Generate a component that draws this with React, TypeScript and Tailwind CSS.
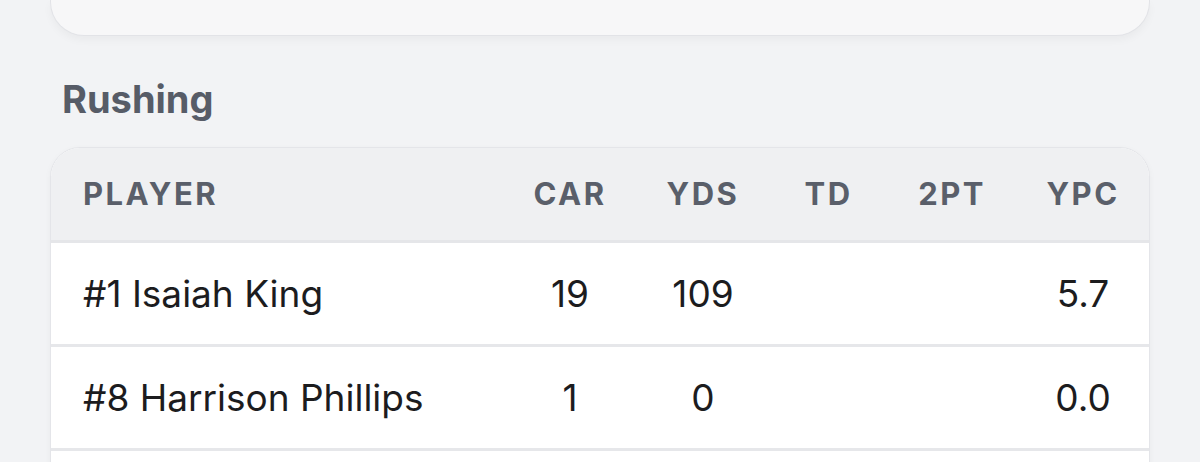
const COLS = 'grid grid-cols-[451px_136px_130px_121px_126px_136px]'

const rows = [
  { player: '#1 Isaiah King', car: '19', yds: '109', td: '', twoPt: '', ypc: '5.7' },
  { player: '#8 Harrison Phillips', car: '1', yds: '0', td: '', twoPt: '', ypc: '0.0' },
]

export default function App() {
  return (
    <div className="min-h-screen bg-[#f2f3f5] px-[50px] font-['Inter',sans-serif]">
      {/* bottom of the previous card */}
      <div className="h-[36px] rounded-b-[34px] border border-t-0 border-[#e2e3e7] bg-[#f7f7f8] shadow-[0_4px_8px_rgba(0,0,0,0.04)]" />

      <h2 className="mt-[40px] mb-[25px] pl-3 text-[38px] leading-[46px] font-bold text-[#575c67]">Rushing</h2>

      <div className="overflow-hidden rounded-[30px] border border-[#e4e5e9] bg-white shadow-[0_2px_6px_rgba(0,0,0,0.04)]">
        <div className={`${COLS} h-[95px] items-center border-b-[3px] border-[#e5e6e9] bg-[#eff0f2] text-[31px] font-bold tracking-[0.08em] text-[#5a5f6a]`}>
          <div className="pl-8">PLAYER</div>
          <div className="text-center">CAR</div>
          <div className="text-center">YDS</div>
          <div className="text-center">TD</div>
          <div className="text-center">2PT</div>
          <div className="text-center">YPC</div>
        </div>
        {rows.map((r) => (
          <div key={r.player} className={`${COLS} h-[104px] items-center border-b-[3px] border-[#e6e7ea] text-[37px] text-[#1c1c1e]`}>
            <div className="pl-8">{r.player}</div>
            <div className="text-center">{r.car}</div>
            <div className="text-center">{r.yds}</div>
            <div className="text-center">{r.td}</div>
            <div className="text-center">{r.twoPt}</div>
            <div className="text-center">{r.ypc}</div>
          </div>
        ))}
        <div className="h-[104px]" />
      </div>
    </div>
  )
}
